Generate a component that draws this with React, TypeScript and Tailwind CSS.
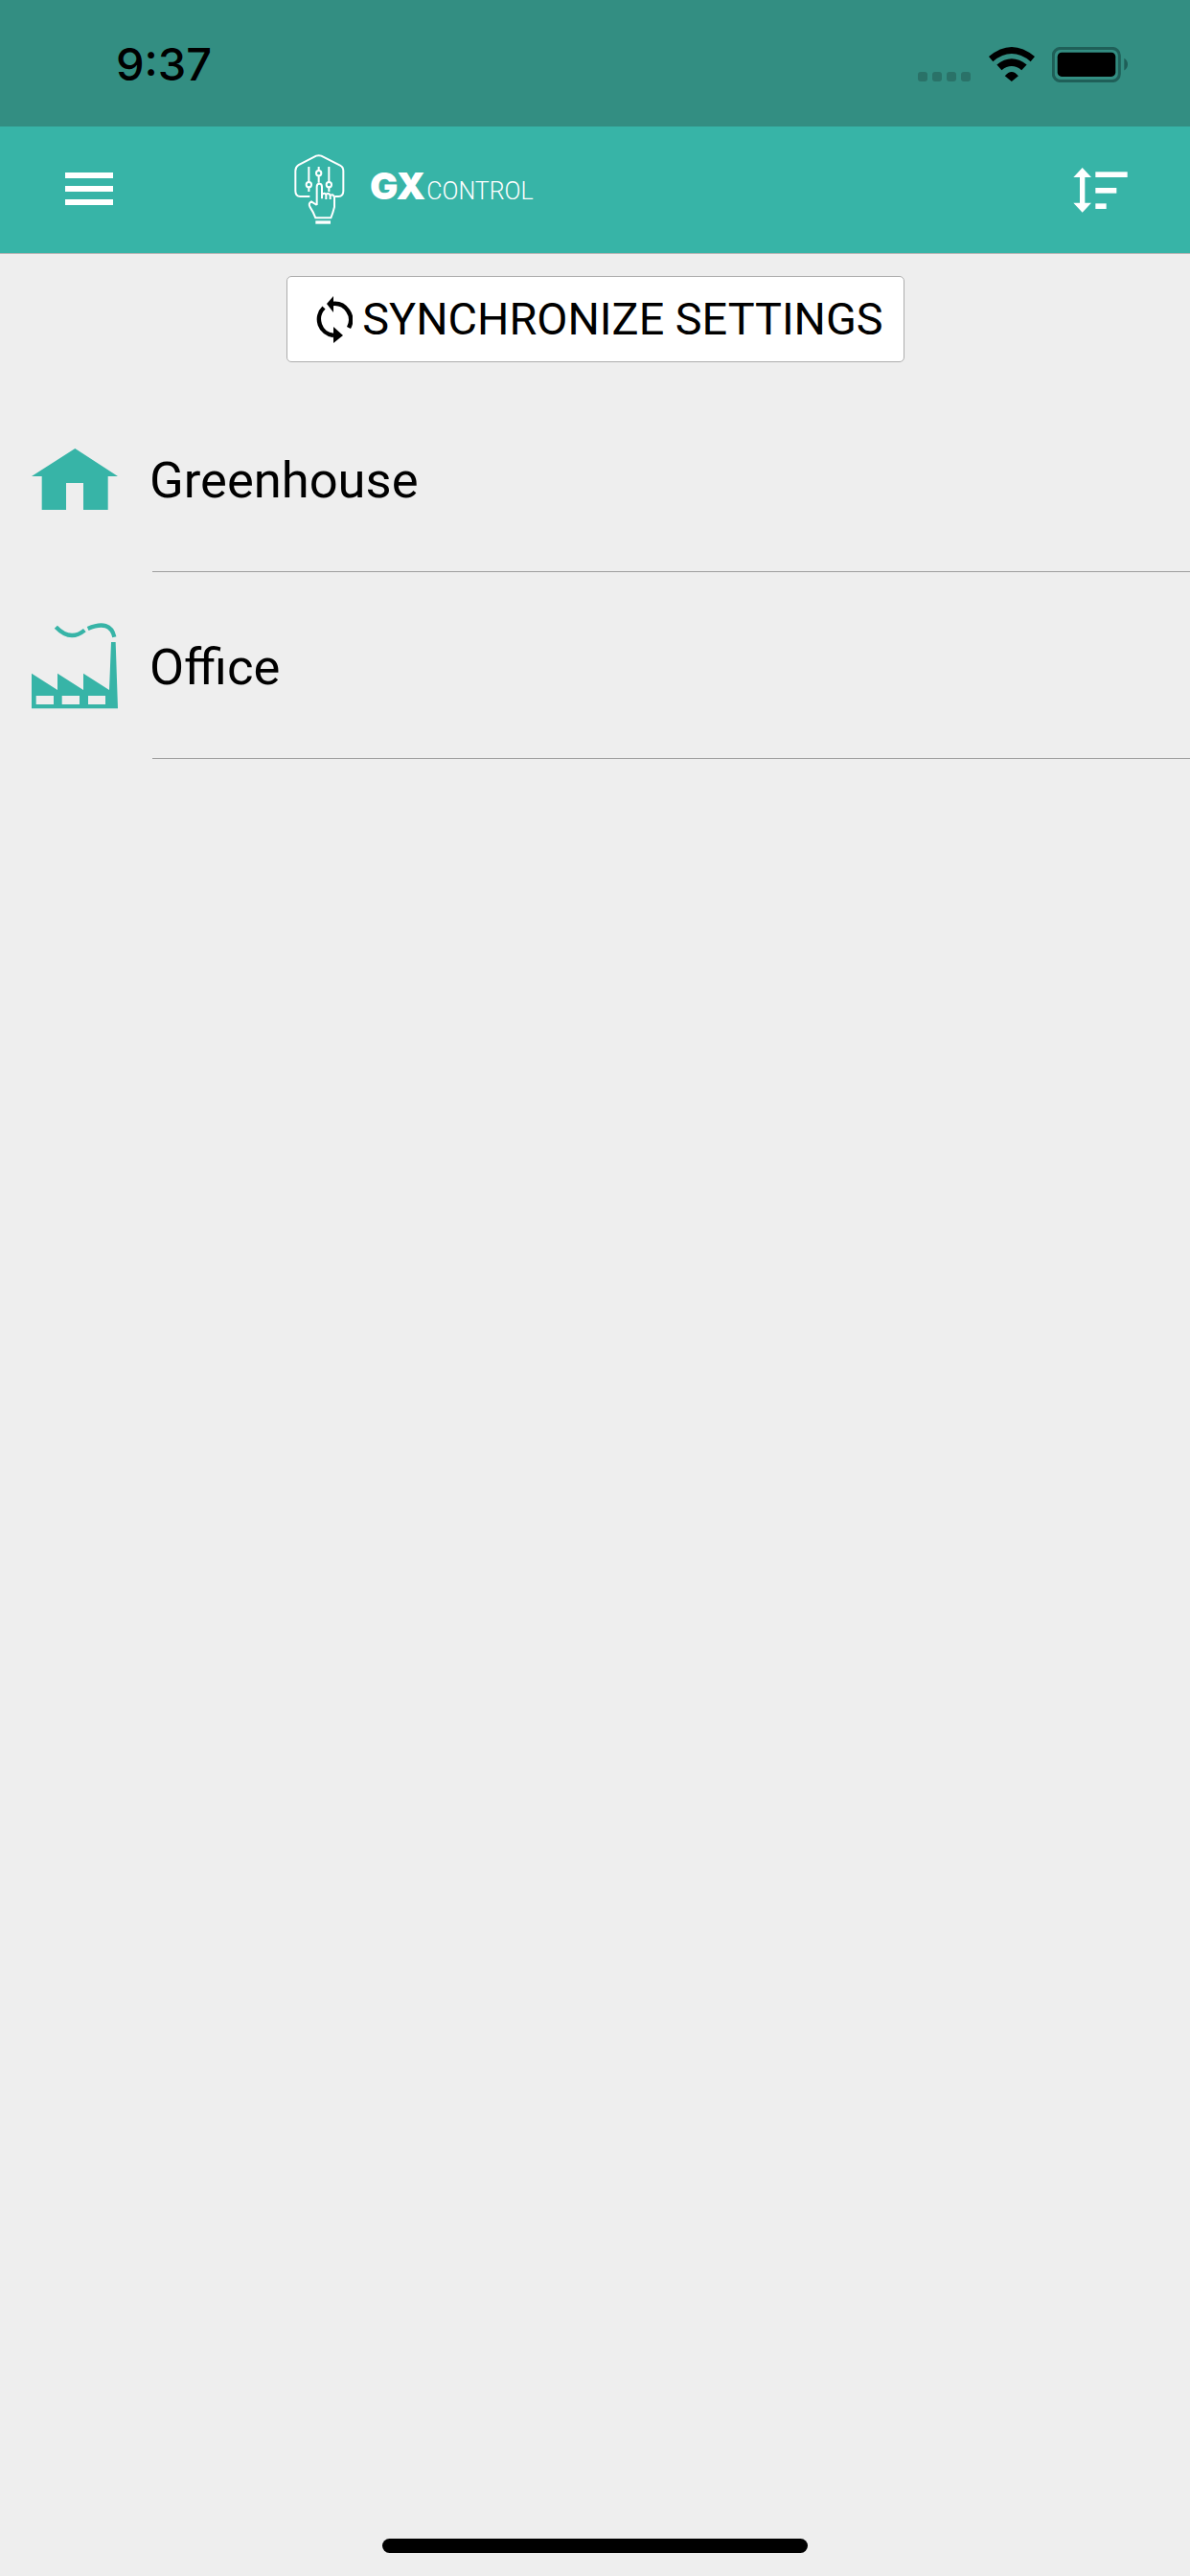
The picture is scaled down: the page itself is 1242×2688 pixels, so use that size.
const roboto = "font-['Roboto',sans-serif]";

function Wifi() {
  return (
    <svg viewBox="395 88 143 107" className="w-[48px] h-[36px]" fill="#000">
      <path d="M395 118Q466 58 538 118L525 133Q466 85 408 133Z" />
      <path d="M420 143Q466 105 513 143L497 160Q466 135 435 160Z" />
      <path d="M445 178Q466 152 487 178L466 195Z" />
    </svg>
  );
}

function Battery() {
  return (
    <svg viewBox="595 88 236 110" className="w-[79px] h-[37px]">
      <rect x="599" y="92" width="206" height="102" rx="22" fill="none" stroke="#1f5f58" strokeWidth="9" />
      <rect x="612" y="105" width="181" height="75" rx="13" fill="#000" />
      <path d="M820 123Q831 130 831 142Q831 153 820 161Z" fill="#1f5f58" />
    </svg>
  );
}

function Logo() {
  return (
    <svg viewBox="48 33 162 222" className="w-[54px] h-[74px]" fill="none" stroke="#fff" strokeWidth="6">
      <path d="M100 165H70Q55 165 55 148V85Q55 73 65 66L120 38Q128 35 136 38L195 68Q205 73 205 85V148Q205 165 190 165H178" />
      <path d="M97 72V120M97 136V150M128 72V84M128 100V122M160 72V120M160 136V150" />
      <circle cx="97" cy="128" r="8" />
      <circle cx="128" cy="92" r="8" />
      <circle cx="160" cy="128" r="8" />
      <path d="M122 192V135Q122 125 130 125Q138 125 138 135V172M138 160Q146 150 151 160V174M151 158Q159 152 164 162V174M164 162Q174 156 177 168V198Q172 218 166 232H118Q110 212 100 197Q95 186 105 181L122 192" strokeLinejoin="round" />
      <rect x="118" y="241" width="47" height="10" fill="#fff" stroke="none" />
    </svg>
  );
}

function SortIcon() {
  return (
    <svg viewBox="660 460 171 141" className="w-[57px] h-[47px]" fill="#fff">
      <path d="M689 460L717 490H697V570H717L689 600L661 570H681V490H661Z" />
      <rect x="730" y="473" width="100" height="17" />
      <rect x="730" y="523" width="66" height="17" />
      <rect x="730" y="572" width="34" height="17" />
    </svg>
  );
}

function SyncIcon() {
  return (
    <svg viewBox="0 0 38 49" className="w-[38px] h-[49px]">
      <path d="M17 8A17 17 0 0 1 34 33" fill="none" stroke="#000" strokeWidth="4.5" />
      <path d="M18 41A17 17 0 0 1 8 12" fill="none" stroke="#000" strokeWidth="4.5" />
      <path d="M11 8L18 0V17Z" fill="#000" />
      <path d="M28 41L18 32V49Z" fill="#000" />
    </svg>
  );
}

function HouseIcon() {
  return (
    <svg viewBox="99 84 270 192" className="w-[90px] h-[64px]" fill="#37b4a7">
      <path d="M235 84L369 171H338V276H261V192H207V276H131V171H99Z" />
    </svg>
  );
}

function FactoryIcon() {
  return (
    <svg viewBox="99 630 270 270" className="w-[90px] h-[90px]">
      <path
        fill="#37b4a7"
        fillRule="evenodd"
        d="M99 788L180 840V788L261 840V788L342 840L348 690H362L369 898H99ZM113 858V885H168V858ZM194 858V885H249V858ZM276 858V885H330V858Z"
      />
      <path d="M175 643Q220 690 265 653M275 648Q345 618 358 674" fill="none" stroke="#37b4a7" strokeWidth="13" />
    </svg>
  );
}

const sites = [
  { name: "Greenhouse", icon: <HouseIcon /> },
  { name: "Office", icon: <FactoryIcon /> },
];

export default function App() {
  return (
    <div className={`w-[1242px] h-[2688px] bg-[#eeeeee] flex flex-col ${roboto}`}>
      {/* Status bar */}
      <div className="h-[132px] bg-[#338e82] flex items-center pl-[121px] pr-[65px] pt-[2px] shrink-0">
        <span className="font-['Inter',sans-serif] font-medium text-[47px] text-black">9:37</span>
        <div className="ml-auto flex items-center">
          <div className="flex gap-[5px] mt-[26px]">
            <span className="w-[10px] h-[10px] rounded-[3px] bg-[#2a7268]" />
            <span className="w-[10px] h-[10px] rounded-[3px] bg-[#2a7268]" />
            <span className="w-[10px] h-[10px] rounded-[3px] bg-[#2a7268]" />
            <span className="w-[10px] h-[10px] rounded-[3px] bg-[#2a7268]" />
          </div>
          <div className="ml-[19px]">
            <Wifi />
          </div>
          <div className="ml-[18px]">
            <Battery />
          </div>
        </div>
      </div>

      {/* Nav */}
      <div className="h-[133px] bg-[#37b4a7] border-b border-[#b5b5b5] flex items-center pl-[68px] pr-[65px] shrink-0">
        <div className="flex flex-col gap-[8px] w-[50px] mb-[2px]">
          <span className="h-[6px] bg-white" />
          <span className="h-[6px] bg-white" />
          <span className="h-[6px] bg-white" />
        </div>
        <div className="ml-[188px] flex items-center">
          <Logo />
          <div className="ml-[26px] flex items-baseline text-white mb-[10px]">
            <span className="font-['Inter',sans-serif] font-black text-[39px] leading-none tracking-[-1px]">GX</span>
            <span className="font-light text-[25px] leading-none ml-[2px]">CONTROL</span>
          </div>
        </div>
        <div className="ml-auto">
          <SortIcon />
        </div>
      </div>

      {/* Sync button */}
      <div className="flex justify-center mt-[23px] shrink-0">
        <div className="w-[645px] h-[90px] bg-white border border-[#adadad] rounded-[5px] flex items-center justify-center gap-[10px] pl-[10px]">
          <SyncIcon />
          <span className="text-[46.8px] text-black leading-none">SYNCHRONIZE SETTINGS</span>
        </div>
      </div>

      {/* Sites */}
      <div className="mt-[24px]">
        {sites.map((site) => (
          <div key={site.name} className="flex h-[195px]">
            <div className="w-[159px] pl-[33px] flex items-center shrink-0">{site.icon}</div>
            <div className="flex-1 flex items-center border-b border-[#9e9e9e] text-[52.5px] text-black pt-[4px]">
              <span className="-ml-[3px]">{site.name}</span>
            </div>
          </div>
        ))}
      </div>

      {/* Home indicator */}
      <div className="mt-auto mb-[24px] mx-auto w-[444px] h-[15px] rounded-full bg-black shrink-0" />
    </div>
  );
}
